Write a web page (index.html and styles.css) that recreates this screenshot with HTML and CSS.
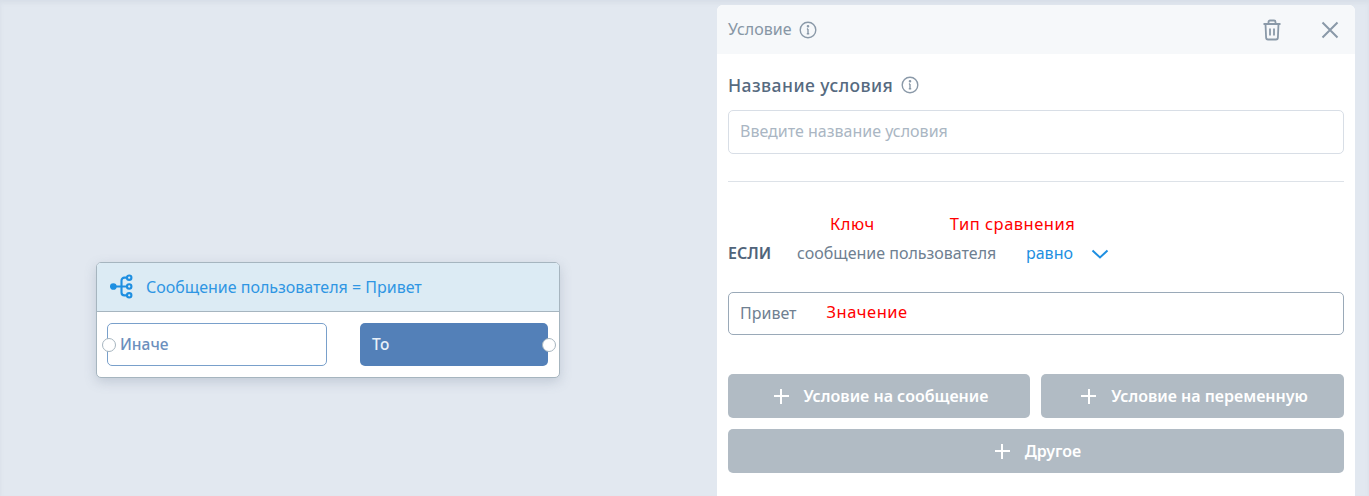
FILE: index.html
```html
<!DOCTYPE html>
<html lang="ru">
<head>
<meta charset="utf-8">
<title>Условие</title>
<link rel="stylesheet" href="styles.css">
</head>
<body>
<div class="app">
  <main class="canvas">
    <div class="node">
      <div class="node-head">
        <svg class="node-icon" width="26" height="26" viewBox="0 0 26 26" fill="none" stroke="#1e8fe1" stroke-width="2.2">
          <circle cx="4.5" cy="13" r="2.4" fill="#1e8fe1"/>
          <circle cx="21" cy="3.8" r="2.3"/>
          <circle cx="21" cy="13" r="2.3"/>
          <circle cx="21" cy="22.2" r="2.3"/>
          <path d="M7 13h11.500M18.700 3.800h-2.700a3 3 0 0 0-3 3v12.400a3 3 0 0 0 3 3h2.700"/>
        </svg>
        <span class="node-title">Сообщение пользователя = Привет</span>
      </div>
      <div class="node-body">
        <div class="port-btn port-else"><span class="dot dot-left"></span>Иначе</div>
        <div class="port-btn port-then">То<span class="dot dot-right"></span></div>
      </div>
    </div>
  </main>
  <aside class="panel">
    <header class="panel-head">
      <span class="panel-title">Условие</span>
      <svg class="info" width="18" height="18" viewBox="0 0 18 18" fill="none" stroke="#8a99a8" stroke-width="1.400"><circle cx="9" cy="9" r="7.800"/><path d="M9 8v4.500M7.800 12.700h2.400M7.900 8h1.100"/><circle cx="9" cy="5.300" r=".6" fill="#8a99a8"/></svg>
      <span class="spacer"></span>
      <svg class="trash" width="20" height="22" viewBox="0 0 20 22" fill="none" stroke="#8a99a8" stroke-width="1.800"><path d="M1.500 5h17M3.500 5l.6 13.500a2 2 0 0 0 2 2h7.800a2 2 0 0 0 2-2L16.500 5M6.500 5V3a1.500 1.500 0 0 1 1.500-1.500h4A1.500 1.500 0 0 1 13.500 3v2M8 9.500v7M12 9.500v7"/></svg>
      <svg class="close" width="18" height="18" viewBox="0 0 18 18" fill="none" stroke="#8a99a8" stroke-width="2"><path d="M1.500 1.500l15 15M16.500 1.500l-15 15"/></svg>
    </header>
    <div class="panel-body">
      <div class="label-row">
        <span class="label">Название условия</span>
        <svg class="info" width="18" height="18" viewBox="0 0 18 18" fill="none" stroke="#8a99a8" stroke-width="1.400"><circle cx="9" cy="9" r="7.800"/><path d="M9 8v4.500M7.800 12.700h2.400M7.900 8h1.100"/><circle cx="9" cy="5.300" r=".6" fill="#8a99a8"/></svg>
      </div>
      <div class="field field-empty">Введите название условия</div>
      <hr class="divider">
      <div class="notes">
        <span class="note note-key">Ключ</span>
        <span class="note note-type">Тип сравнения</span>
      </div>
      <div class="cond-row">
        <span class="cond-if">ЕСЛИ</span>
        <span class="cond-key">сообщение пользователя</span>
        <span class="cond-op">равно</span>
        <svg class="chev" width="18" height="10" viewBox="0 0 18 10" fill="none" stroke="#1e8fe1" stroke-width="2"><path d="M1.500 1.500L9 8.500l7.500-7"/></svg>
      </div>
      <div class="field field-value"><span class="value-text">Привет</span><span class="note note-value">Значение</span></div>
      <div class="actions">
        <button class="add-btn"><span class="plus"></span>Условие на сообщение</button>
        <button class="add-btn"><span class="plus"></span>Условие на переменную</button>
        <button class="add-btn add-wide"><span class="plus"></span>Другое</button>
      </div>
    </div>
  </aside>
</div>
</body>
</html>
```
FILE: styles.css
```css
* { box-sizing: border-box; }
html, body { margin: 0; height: 100%; }
body {
  background: #e2e8f0;
  font-family: "Noto Sans", "Open Sans", sans-serif;
  overflow: hidden;
}
.app {
  display: flex;
  height: 496px;
  padding-top: 5px;
  padding-right: 14px;
  box-shadow: inset 0 3px 4px rgba(100, 116, 139, .08);
}
.canvas { position: relative; flex: 1; }

/* node */
.node {
  position: absolute;
  left: 96px;
  top: 257px;
  width: 464px;
  height: 116px;
  background: #fff;
  border: 1px solid #a6b5bf;
  border-radius: 5px;
  box-shadow: 0 4px 12px rgba(100, 116, 139, .25);
}
.node-head {
  display: flex;
  align-items: center;
  height: 49px;
  padding: 0 0 1px 12px;
  background: #dcebf4;
  border-bottom: 1px solid #a6b5bf;
  border-radius: 4px 4px 0 0;
}
.node-icon { width: 25px; height: 25px; margin-right: 12px; }
.node-title { font-size: 16px; color: #2f96e3; }
.node-body {
  display: flex;
  justify-content: space-between;
  padding: 11px 11px 0 10px;
}
.port-btn {
  position: relative;
  display: flex;
  align-items: center;
  height: 43px;
  padding-bottom: 2px;
  border-radius: 5px;
  font-size: 15.500px;
  font-weight: 500;
}
.port-else {
  width: 220px;
  padding-left: 12px;
  color: #6c8fbd;
  background: #fff;
  border: 1px solid #79a0cb;
}
.port-then {
  width: 188px;
  padding-left: 12px;
  color: #e8f0f8;
  background: #5380b8;
}
.dot {
  position: absolute;
  top: 50%;
  width: 14px;
  height: 14px;
  margin-top: -7px;
  background: #fff;
  border: 1px solid #a6b5bf;
  border-radius: 50%;
}
.dot-left { left: -6px; }
.dot-right { right: -8px; }

/* panel */
.panel {
  width: 638px;
  background: #fff;
  border-radius: 6px 6px 0 0;
}
.panel-head {
  display: flex;
  align-items: center;
  height: 49px;
  padding: 0 16px 0 11px;
  background: #f6f8fa;
  border-radius: 6px 6px 0 0;
}
.panel-title { font-size: 16px; color: #8796a5; margin-right: 8px; padding-bottom: 2px; }
.spacer { flex: 1; }
.trash { margin-right: 39px; }
.panel-body { padding: 20px 11px 0; }
.label-row { display: flex; align-items: center; height: 22px; }
.label { font-size: 17.500px; font-weight: 500; color: #566a80; margin-right: 8px; letter-spacing: .45px; }
.field {
  display: flex;
  align-items: center;
  border-radius: 5px;
  padding: 0 11px 2px;
  font-size: 16px;
}
.field-empty {
  height: 44px;
  margin-top: 14px;
  color: #aab6c3;
  border: 1px solid #d8dee6;
}
.divider {
  margin: 27px 0 0;
  border: 0;
  border-top: 1px solid #dde2e8;
}
.notes { display: flex; height: 24px; margin-top: 29px; align-items: center; }
.note { font-size: 16.500px; color: #ff0000; letter-spacing: .5px; }
.note-key { margin-left: 102px; }
.note-type { margin-left: 75px; }
.note-value { margin-bottom: 2px; }
.cond-row { display: flex; align-items: center; height: 24px; margin-top: 6px; font-size: 16px; }
.cond-if { font-weight: 600; color: #50647a; width: 69px; }
.cond-key { color: #6f8091; width: 229px; }
.cond-op { color: #1e8fe1; width: 65px; }
.chev { margin-top: 2px; }
.field-value {
  height: 43px;
  margin-top: 27px;
  color: #6f8091;
  border: 1px solid #9aa9b8;
}
.value-text { margin-right: 30px; }
.actions {
  display: grid;
  grid-template-columns: 302px 303px;
  gap: 11px;
  margin-top: 39px;
}
.add-btn {
  display: flex;
  align-items: center;
  justify-content: center;
  height: 44px;
  padding: 0 0 0 4px;
  border: 0;
  border-radius: 5px;
  background: #b1bbc4;
  color: #fff;
  font-family: inherit;
  font-size: 16px;
  font-weight: 600;
}
.add-wide { grid-column: 1 / -1; }
.plus {
  width: 15px;
  height: 15px;
  margin-right: 15px;
  background:
    linear-gradient(#fff, #fff) center / 15px 2px no-repeat,
    linear-gradient(#fff, #fff) center / 2px 15px no-repeat;
}
```
